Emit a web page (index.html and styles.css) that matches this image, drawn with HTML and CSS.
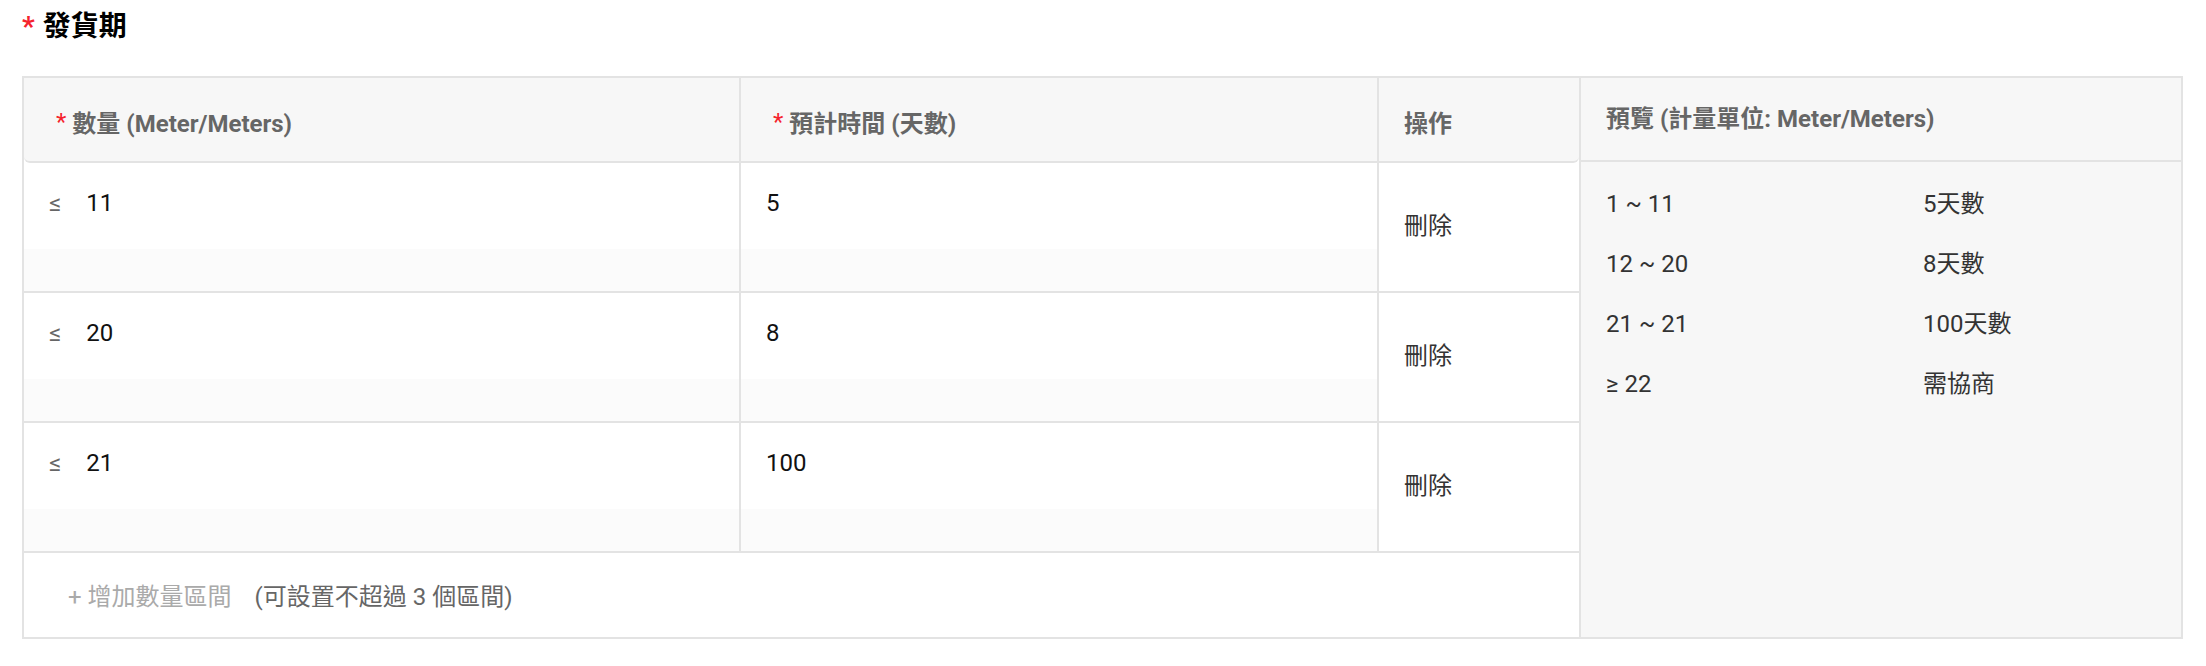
FILE: index.html
```html
<!DOCTYPE html>
<html lang="zh-Hant">

<head>
    <meta charset="UTF-8">
    <link rel="stylesheet" href="styles.css">
    <meta name="viewport" content="width=device-width, initial-scale=1.0">
    <title>發貨期</title>
</head>

<body>
    <div class="field">
        <div class="field-label"><span class="req">*</span>發貨期</div>
        <div class="lead-box">
            <div class="lead-table">
                <div class="lead-head">
                    <div class="cell c-qty"><span class="req">*</span>數量 (Meter/Meters)</div>
                    <div class="cell c-days"><span class="req">*</span>預計時間 (天數)</div>
                    <div class="cell c-op">操作</div>
                </div>
                <div class="lead-row">
                    <div class="cell c-qty">
                        <div class="in"><span class="le">≤</span>11</div>
                        <div class="tip"></div>
                    </div>
                    <div class="cell c-days">
                        <div class="in">5</div>
                        <div class="tip"></div>
                    </div>
                    <div class="cell c-op">刪除</div>
                </div>
                <div class="lead-row">
                    <div class="cell c-qty">
                        <div class="in"><span class="le">≤</span>20</div>
                        <div class="tip"></div>
                    </div>
                    <div class="cell c-days">
                        <div class="in">8</div>
                        <div class="tip"></div>
                    </div>
                    <div class="cell c-op">刪除</div>
                </div>
                <div class="lead-row">
                    <div class="cell c-qty">
                        <div class="in"><span class="le">≤</span>21</div>
                        <div class="tip"></div>
                    </div>
                    <div class="cell c-days">
                        <div class="in">100</div>
                        <div class="tip"></div>
                    </div>
                    <div class="cell c-op">刪除</div>
                </div>
                <div class="lead-foot">
                    <span class="add">+ 增加數量區間</span>
                    <span class="hint">(可設置不超過 3 個區間)</span>
                </div>
            </div>
            <div class="preview">
                <div class="preview-head">預覽 (計量單位: Meter/Meters)</div>
                <div class="preview-list">
                    <div class="preview-row"><span>1 ~ 11</span><span>5天數</span></div>
                    <div class="preview-row"><span>12 ~ 20</span><span>8天數</span></div>
                    <div class="preview-row"><span>21 ~ 21</span><span>100天數</span></div>
                    <div class="preview-row"><span>≥ 22</span><span>需協商</span></div>
                </div>
            </div>
        </div>
    </div>
</body>

</html>
```

FILE: styles.css
```css
body {
    margin: 0;
    padding: 7px 23px 0 22px;
    font-family: Roboto, "Noto Sans CJK TC", sans-serif;
    font-size: 24px;
    color: #222;
}

.field-label {
    font-size: 28px;
    font-weight: bold;
    line-height: 40px;
    color: #000;
}

.req {
    color: #f5222d;
    margin-right: 8px;
}

.lead-head .req {
    margin-right: 6px;
    font-weight: normal;
}

.lead-box {
    margin-top: 29px;
    display: flex;
    border: 2px solid #e3e3e3;
}

.lead-table {
    flex: 1;
    background: #fff;
}

.lead-head {
    display: flex;
    height: 83px;
    background: #f7f7f7;
    border-bottom: 2px solid #e3e3e3;
    border-radius: 0 0 6px 6px;
    color: #666;
    font-weight: bold;
}

.lead-head .cell {
    display: flex;
    align-items: center;
    padding-top: 4px;
}

.lead-head .c-qty,
.lead-head .c-days {
    padding-left: 32px;
}

.lead-head .c-op {
    padding-left: 25px;
}

.cell {
    box-sizing: border-box;
}

.c-qty {
    width: 717px;
    border-right: 2px solid #e3e3e3;
}

.c-days {
    width: 638px;
    border-right: 2px solid #e3e3e3;
}

.c-op {
    flex: 1;
}

.lead-row {
    display: flex;
    border-bottom: 2px solid #e3e3e3;
}

.in {
    height: 86px;
    box-sizing: border-box;
    display: flex;
    align-items: center;
    padding: 0 25px 6px;
    color: #111;
}

.le {
    color: #666;
    margin-right: 25px;
}

.tip {
    height: 42px;
    background: #fbfbfb;
}

.lead-row .c-op {
    display: flex;
    align-items: center;
    padding: 0 0 8px 25px;
    color: #333;
}

.lead-foot {
    height: 84px;
    box-sizing: border-box;
    display: flex;
    align-items: center;
    padding: 0 0 2px 44px;
}

.add {
    color: #aaa;
    margin-right: 23px;
}

.hint {
    color: #666;
}

.preview {
    flex: none;
    width: 600px;
    border-left: 2px solid #e3e3e3;
    background: #f7f7f7;
}

.preview-head {
    height: 84px;
    box-sizing: border-box;
    display: flex;
    align-items: center;
    padding: 0 0 6px 25px;
    border-bottom: 2px solid #e3e3e3;
    color: #666;
    font-weight: bold;
}

.preview-list {
    padding: 12px 0 0 25px;
}

.preview-row {
    display: grid;
    grid-template-columns: 317px 1fr;
    line-height: 60px;
    color: #333;
}
```
